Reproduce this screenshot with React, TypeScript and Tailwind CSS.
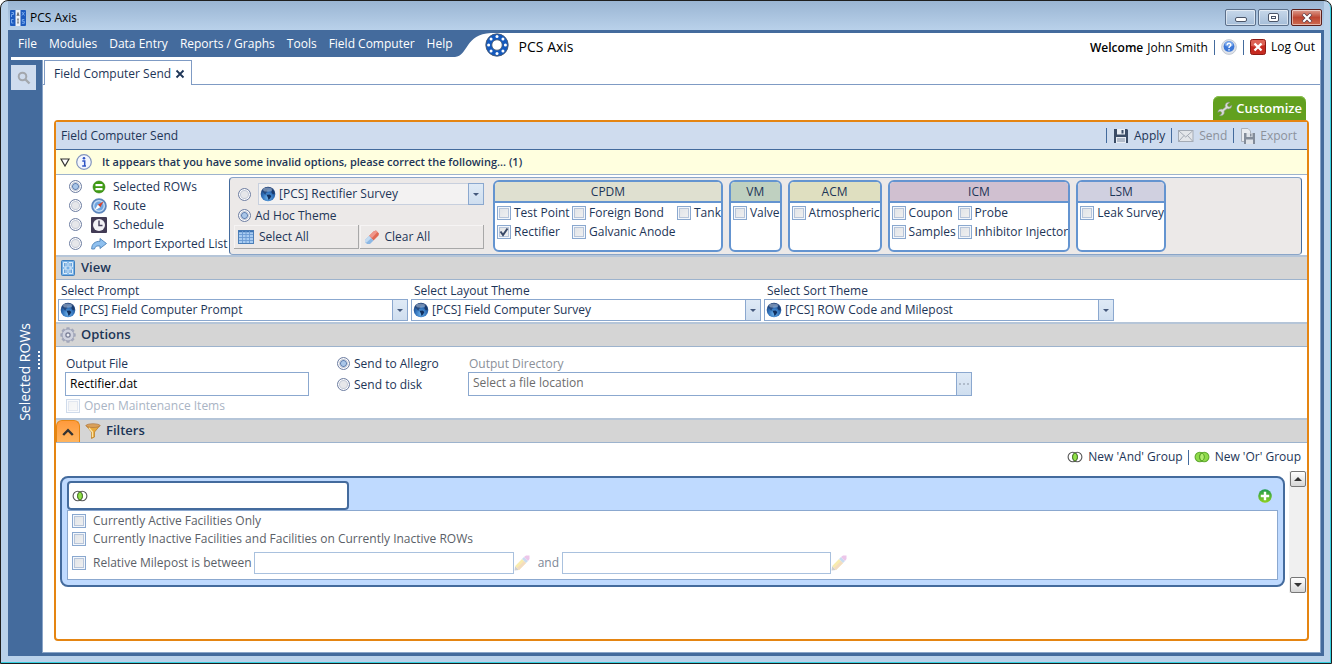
import React, { useId } from "react";

type IconProps = { className?: string };

function Globe({ className = "" }: IconProps) {
  return (
    <svg viewBox="0 0 16 16" className={`size-4 shrink-0 ${className}`} aria-hidden="true">
      <defs>
        <radialGradient id="globeSea" cx="50%" cy="75%" r="70%">
          <stop offset="0" stopColor="#6fb4ec" />
          <stop offset="0.55" stopColor="#2f6fb8" />
          <stop offset="1" stopColor="#1c3f78" />
        </radialGradient>
      </defs>
      <circle cx="8" cy="8" r="7.3" fill="url(#globeSea)" />
      <path d="M1.6 5C3 2.6 5 1.4 7.4 1.2L8.6 3 6.8 4.2 7.6 6 5.6 7 6.4 8.6 4.6 8.2 3.4 6.4Z" fill="#24497f" />
      <path d="M6.6 8.8 9.6 8.4 11.4 10 10.2 12.2 8.6 14 7.8 11.4Z" fill="#12305e" />
      <path d="M10.4 2.2C13 3 14.6 5.4 14.8 7.6L13 8.4 11.4 6.4 12 4.4Z" fill="#1b3b6c" />
      <ellipse cx="7.6" cy="3.6" rx="4.6" ry="2.2" fill="#fff" opacity="0.35" />
    </svg>
  );
}

function AppIcon() {
  return (
    <svg viewBox="0 0 16 16" className="size-4 shrink-0" aria-hidden="true">
      <rect width="16" height="16" rx="1" fill="#1d5bbf" />
      <rect x="5.5" width="5" height="16" fill="#eef2f8" />
      <path d="M7 6 8 2.5 9 6M7.3 5H8.7M8 9V13M7.2 9H8.8M7.2 13H8.8" stroke="#555" strokeWidth="0.8" fill="none" />
      <path d="M1.5 2.5H3.5V4.5H1.5V7M12 2 14.5 5.5M14.5 2 12 5.5M3.5 9.5H1.5V13H3.5M14.3 9.5H12.3V11.3H14.3V13.3H12" stroke="#7fb0f2" strokeWidth="0.9" fill="none" />
    </svg>
  );
}

function Flange() {
  const holes = Array.from({ length: 8 }, (_, i) => {
    const a = (i * Math.PI) / 4;
    return [12 + 8.4 * Math.cos(a), 12 + 8.4 * Math.sin(a)];
  });
  return (
    <svg viewBox="0 0 24 24" className="size-6 shrink-0" aria-hidden="true">
      <circle cx="12" cy="12" r="11.2" fill="#1459bd" stroke="#4a5a70" strokeWidth="0.9" />
      <circle cx="12" cy="12" r="5.2" fill="#fff" stroke="#4a5a70" strokeWidth="0.8" />
      {holes.map(([x, y]) => (
        <circle key={`${x}-${y}`} cx={x} cy={y} r="1.5" fill="#fff" />
      ))}
    </svg>
  );
}

function HelpIcon() {
  return (
    <svg viewBox="0 0 16 16" className="size-4" aria-hidden="true">
      <circle cx="8" cy="8" r="7.4" fill="#dfe3ea" stroke="#b9c0cc" strokeWidth="0.8" />
      <circle cx="8" cy="7.4" r="5.4" fill="#3d78d8" />
      <ellipse cx="8" cy="5" rx="4.4" ry="2.8" fill="#8db6f2" opacity="0.7" />
      <path d="M6.2 6.2C6.2 3.6 9.9 3.8 9.8 6 9.7 7.4 8 7.2 8 9M8 10.2V11.4" stroke="#fff" strokeWidth="1.5" fill="none" />
    </svg>
  );
}

function LogOutIcon() {
  return (
    <svg viewBox="0 0 16 16" className="size-4" aria-hidden="true">
      <rect x="0.5" y="0.5" width="15" height="15" rx="2" fill="#c62a20" stroke="#8c1a14" />
      <path d="M1 2.5Q1 1 2.5 1H13.500Q15 1 15 2.500V6Q8 9 1 7Z" fill="#e77a6c" opacity="0.7" />
      <path d="M4.500 4.500 11.500 11.500M11.500 4.500 4.500 11.500" stroke="#fff" strokeWidth="2.400" />
    </svg>
  );
}

function Wrench() {
  return (
    <svg viewBox="0 0 16 16" className="size-4 shrink-0" aria-hidden="true">
      <path
        d="M14.800 4.200 12.300 5.900 10.600 5.100 10.500 3.200 12.900 1.400C10.500.600 8.200 2 8.100 4.500L8.300 6.200 5.600 8.300C3.500 7.600 1.200 8.800.800 11.300L3 10.300 4.600 11.200 4.500 13 2.500 14.600C5 15.400 7.400 13.800 7.300 11.200L7.100 10.100 10 7.800C12.500 8.500 15 6.800 14.800 4.200Z"
        fill="#d9dcd8"
        stroke="#8c9388"
        strokeWidth="0.6"
      />
    </svg>
  );
}

function SaveIcon() {
  return (
    <svg viewBox="0 0 16 16" className="size-4" aria-hidden="true">
      <path d="M1 1H14L15 2V15H1Z" fill="#3b4c66" />
      <rect x="4" y="1" width="8" height="5.500" fill="#e8edf4" />
      <rect x="8.500" y="2" width="2" height="3.500" fill="#3b4c66" />
      <rect x="3" y="9" width="10" height="6" fill="#e8edf4" />
      <path d="M4 11H12M4 13H12" stroke="#7c8aa0" />
    </svg>
  );
}

function MailIcon() {
  return (
    <svg viewBox="0 0 16 16" className="size-4" aria-hidden="true">
      <rect x="0.500" y="2.500" width="14.500" height="11" fill="#e3e6ea" stroke="#a4abb5" />
      <path d="M1 3 7.700 9 14.500 3M1 13 6 7.500M14.500 13 9.500 7.500" stroke="#a4abb5" fill="none" />
    </svg>
  );
}

function ExportIcon() {
  return (
    <svg viewBox="0 0 16 16" className="size-4" aria-hidden="true">
      <path d="M1.500.500H8L10.500 3V13.500H1.500Z" fill="#e9ecf1" stroke="#aab1bc" />
      <path d="M4 5H15V16H4Z" fill="#838c9a" />
      <rect x="6.500" y="5" width="6" height="4" fill="#dfe3e9" />
      <rect x="6" y="11.500" width="7" height="4.500" fill="#dfe3e9" />
      <rect x="10" y="5.500" width="1.500" height="3" fill="#838c9a" />
    </svg>
  );
}

function InfoIcon() {
  return (
    <svg viewBox="0 0 16 16" className="size-4" aria-hidden="true">
      <circle cx="8" cy="8" r="7.300" fill="#f4f7fd" stroke="#8294bd" strokeWidth="1.200" />
      <circle cx="8" cy="4.300" r="1.300" fill="#2f55c4" />
      <path d="M6.300 6.900H8.700V12M6.200 12H10" stroke="#2f55c4" strokeWidth="1.500" fill="none" />
    </svg>
  );
}

function RowsIcon() {
  return (
    <svg viewBox="0 0 16 16" className="size-4" aria-hidden="true">
      <circle cx="8" cy="8" r="6" fill="#3f9c12" stroke="#2f7d0c" strokeWidth="0.600" />
      <rect x="4.500" y="5" width="7" height="2.200" fill="#fff" />
      <rect x="4.500" y="9" width="7" height="2.200" fill="#fff" />
    </svg>
  );
}

function RouteIcon() {
  return (
    <svg viewBox="0 0 16 16" className="size-4" aria-hidden="true">
      <circle cx="8" cy="8" r="6.900" fill="#c3dcf6" stroke="#5c86bd" strokeWidth="1.800" />
      <circle cx="8" cy="8" r="4.600" fill="#6fa5e0" />
      <path d="M12.500 3.500 9.300 9.200 6.800 6.700Z" fill="#d9402a" />
      <path d="M3.500 12.500 6.800 6.700 9.300 9.200Z" fill="#fff" />
    </svg>
  );
}

function ScheduleIcon() {
  return (
    <svg viewBox="0 0 16 16" className="size-4" aria-hidden="true">
      <rect width="16" height="16" rx="1" fill="#423b55" />
      <circle cx="8" cy="8" r="6" fill="#f3f2f6" />
      <path d="M8 3.500V8.500H11.500" stroke="#4b4560" strokeWidth="1.500" fill="none" />
    </svg>
  );
}

function ImportIcon() {
  return (
    <svg viewBox="0 0 16 16" className="size-4" aria-hidden="true">
      <path d="M9 2.500 15.500 7.500 9 12.500V10C5.500 9.500 4 10.500 3.500 13H.700C.500 8 4 5.200 9 5.300Z" fill="#8fc0ef" stroke="#4e82b8" strokeWidth="0.900" />
    </svg>
  );
}

function TableIcon() {
  return (
    <svg viewBox="0 0 16 16" className="size-4" aria-hidden="true">
      <rect x="0.500" y="1.500" width="15" height="13" fill="#a9cdf2" stroke="#4c7fb8" />
      <path d="M.500 2.500H15.500" stroke="#3b72b2" strokeWidth="1.500" />
      <path d="M4.500 2V14M8 2V14M11.500 2V14M1 5.500H15M1 8.500H15M1 11.500H15" stroke="#6a9ad2" strokeWidth="0.900" />
    </svg>
  );
}

function EraserIcon() {
  return (
    <svg viewBox="0 0 16 16" className="size-4" aria-hidden="true">
      <path d="M9.500 2.500 12 1.500 15 4.500 14.500 6.500 9.500 11.500 5 7Z" fill="#e06a55" />
      <path d="M9.500 2.500 12 1.500 13.500 3 8 9 5 7Z" fill="#f0968a" />
      <path d="M5 7 9.500 11.500 6 15H3L1 13V11Z" fill="#8db8e4" />
      <path d="M5 7 7.200 9.200 2.600 13.600 1 13V11Z" fill="#c3dbf2" />
    </svg>
  );
}

function ViewIcon() {
  return (
    <svg viewBox="0 0 16 16" className="size-4" aria-hidden="true">
      <rect x="1.500" y="0.500" width="13" height="15" rx="1" fill="#74b0e6" stroke="#3f7fbe" />
      <path d="M3.500 2.500H7V7H3.500ZM9 2.500H12.500V7H9ZM3.500 9H7V13.500H3.500ZM9 9H12.500V13.500H9Z" fill="#5497d6" stroke="#e8f3fd" strokeWidth="0.900" />
      <path d="M5.250 2.500V13.500M10.750 2.500V13.500" stroke="#e8f3fd" strokeWidth="0.600" />
    </svg>
  );
}

function GearIcon() {
  const teeth = Array.from({ length: 8 }, (_, i) => i * 45);
  return (
    <svg viewBox="0 0 16 16" className="size-4" aria-hidden="true">
      {teeth.map((t) => (
        <rect key={t} x="6.300" y="0.300" width="3.400" height="3.500" rx="0.600" fill="#a3a8bb" transform={`rotate(${t} 8 8)`} />
      ))}
      <circle cx="8" cy="8" r="5.900" fill="#d0d3df" stroke="#9a9fb4" strokeWidth="0.800" />
      <circle cx="8" cy="8" r="2.100" fill="#eceef3" stroke="#777c94" strokeWidth="1.200" />
    </svg>
  );
}

function FunnelIcon() {
  return (
    <svg viewBox="0 0 16 16" className="size-4" aria-hidden="true">
      <path d="M1 2.500 6.500 9V15.500L9.500 14V9L15 2.500Z" fill="#e8a93c" stroke="#b8791f" strokeWidth="0.700" />
      <ellipse cx="8" cy="2.600" rx="7" ry="1.900" fill="#d9a05a" stroke="#a8703a" strokeWidth="0.600" />
      <path d="M4 5 7.500 9V14" stroke="#fbe4a6" strokeWidth="1.300" fill="none" />
    </svg>
  );
}

function AndIcon() {
  return (
    <svg viewBox="0 0 16 12" className="h-3 w-4 shrink-0" aria-hidden="true">
      <circle cx="5.800" cy="6" r="4.700" fill="#fff" stroke="#555" strokeWidth="1.100" />
      <circle cx="10.200" cy="6" r="4.700" fill="none" stroke="#555" strokeWidth="1.100" />
      <path d="M8 1.900A4.700 4.700 0 0 1 8 10.100 4.700 4.700 0 0 1 8 1.900Z" fill="#92e04a" stroke="#4b8a1c" strokeWidth="0.900" />
    </svg>
  );
}

function OrIcon() {
  return (
    <svg viewBox="0 0 16 12" className="h-3 w-4 shrink-0" aria-hidden="true">
      <circle cx="5.800" cy="6" r="4.700" fill="#8fdb4a" stroke="#5fa82e" strokeWidth="1.100" />
      <circle cx="10.200" cy="6" r="4.700" fill="#8fdb4a" stroke="#5fa82e" strokeWidth="1.100" />
      <path d="M8 1.900A4.700 4.700 0 0 1 8 10.100 4.700 4.700 0 0 1 8 1.900Z" fill="#b1ec6e" stroke="#4f9a22" strokeWidth="0.900" />
    </svg>
  );
}

function PlusIcon() {
  return (
    <svg viewBox="0 0 14 14" className="size-3.5" aria-hidden="true">
      <defs>
        <linearGradient id="plusFill" x1="0" y1="0" x2="0" y2="1">
          <stop offset="0" stopColor="#1e9a50" />
          <stop offset="1" stopColor="#8fd11e" />
        </linearGradient>
      </defs>
      <circle cx="7" cy="7" r="6.800" fill="url(#plusFill)" />
      <path d="M7 2.800V11.200M2.800 7H11.200" stroke="#fff" strokeWidth="2.400" />
    </svg>
  );
}

function PencilIcon() {
  return (
    <svg viewBox="0 0 16 16" className="size-4 shrink-0" aria-hidden="true">
      <path d="M.500 15.500 1.200 11 5 15Z" fill="#cfcfcf" />
      <path d="M1.200 11 8 4 12 8 5 15Z" fill="#f8ecae" />
      <path d="M3 13 10 6 12 8 5 15Z" fill="#f3dcc0" />
      <path d="M8 4 10 2 14 6 12 8Z" fill="#c9dcf0" />
      <path d="M10 2 12 .500H15.500V4L14 6Z" fill="#ecc6ea" />
    </svg>
  );
}

function Triangle({ up = false, className = "" }: { up?: boolean; className?: string }) {
  return (
    <svg viewBox="0 0 8 4" className={`h-1 w-2 ${className}`} aria-hidden="true">
      <path d={up ? "M0 4 4 0 8 4Z" : "M0 0H8L4 4Z"} fill="currentColor" />
    </svg>
  );
}

function Radio({
  name,
  label,
  icon,
  checked = false,
  gap = "gap-1",
}: {
  name: string;
  label?: string;
  icon?: React.ReactNode;
  checked?: boolean;
  gap?: string;
}) {
  return (
    <label className={`flex items-center whitespace-nowrap ${gap}`}>
      <input
        type="radio"
        name={name}
        defaultChecked={checked}
        aria-label={label ? undefined : "Saved theme"}
        className="size-[13px] shrink-0 appearance-none rounded-full border border-[#6f7fa3] bg-[#e6e7ea] shadow-[inset_0_0_0_1px_#fff,inset_0_0_0_2px_#c3c9d6] checked:bg-[radial-gradient(circle,#a9c6e8_0_2px,#5f7fb0_3px,#dfe8f4_4px)]"
      />
      {icon}
      {label && <span>{label}</span>}
    </label>
  );
}

function Check({
  label,
  checked = false,
  disabled = false,
  gap = "gap-1",
}: {
  label: string;
  checked?: boolean;
  disabled?: boolean;
  gap?: string;
}) {
  return (
    <label className={`flex items-center whitespace-nowrap ${gap} ${disabled ? "text-[#a9b4c4]" : ""}`}>
      <span className="grid size-3.5 shrink-0">
        <input
          type="checkbox"
          defaultChecked={checked}
          disabled={disabled}
          className="peer col-start-1 row-start-1 size-3.5 appearance-none border border-[#8aa8cf] bg-linear-to-br from-[#dfe2e6] to-[#f2f2f2] shadow-[inset_0_0_0_1px_#f3f7fc,inset_0_0_0_2px_#b7c5da] disabled:opacity-40"
        />
        <svg viewBox="0 0 14 14" className="pointer-events-none z-10 col-start-1 row-start-1 hidden size-3.5 peer-checked:block" aria-hidden="true">
          <path d="M3.500 6.500 6 10 10.500 3.500" stroke="#3a4a68" strokeWidth="2" fill="none" />
        </svg>
      </span>
      <span>{label}</span>
    </label>
  );
}

function ThemeSelect({ id, value, muted = false }: { id: string; value: string; muted?: boolean }) {
  return (
    <div className={`flex h-[22px] min-w-0 items-center border ${muted ? "border-[#c8d0de] bg-[#f3f2f2]" : "border-[#8ba8cf] bg-white"}`}>
      <Globe className="ml-px" />
      <select id={id} aria-label={muted ? "Theme" : undefined} className="h-full min-w-0 flex-1 appearance-none bg-transparent pl-[3px] outline-none">
        <option>{value}</option>
      </select>
      <span
        className={`pointer-events-none flex items-center justify-center self-stretch border-[#8ba8cf] bg-linear-to-b from-[#dfeaf6] to-[#cfdeef] text-[#44597c] ${
          muted ? "-my-px -mr-px w-4 border" : "w-[15px] border-l"
        }`}
      >
        <svg viewBox="0 0 6 3" className="h-[3px] w-1.5" aria-hidden="true">
          <path d="M0 0H6L3 3Z" fill="currentColor" />
        </svg>
      </span>
    </div>
  );
}

function Group({ title, tint, grid, children }: { title: string; tint: string; grid: string; children: React.ReactNode }) {
  return (
    <section className="flex flex-col overflow-hidden rounded-md border-2 border-[#6494d0] bg-white">
      <h3 className={`h-[21px] border-b-2 border-[#6494d0] text-center leading-[19px] ${tint}`}>{title}</h3>
      <div className={`grid auto-rows-[19px] content-start pl-0.5 ${grid}`}>{children}</div>
    </section>
  );
}

function SectionBar({ icon, title, lead }: { icon: React.ReactNode; title: string; lead?: React.ReactNode }) {
  return (
    <div className="flex h-[25px] items-center gap-[5px] border-t-2 border-b border-t-[#b5c5d8] border-b-[#9db3cd] bg-[#d5d5d5] pl-1">
      {lead}
      {icon}
      <h2 className="text-[13px] font-semibold">{title}</h2>
    </div>
  );
}

function Divider() {
  return <span className="h-[15px] w-px bg-[#446b9d]" />;
}

function ThemeField({ label, value }: { label: string; value: string }) {
  const id = useId();
  return (
    <div className="flex min-w-0 max-w-[350px] flex-1 flex-col">
      <label htmlFor={id} className="h-[19px] pl-[3px] leading-[21px]">
        {label}
      </label>
      <ThemeSelect id={id} value={value} />
    </div>
  );
}

const menu = ["File", "Modules", "Data Entry", "Reports / Graphs", "Tools", "Field Computer", "Help"];

function TitleBar() {
  const base = "flex h-[17px] w-[31px] items-center justify-center rounded-xs border shadow-[inset_0_0_0_1px_#ffffff80]";
  return (
    <header className="flex h-[29px] items-center gap-1 bg-linear-to-b from-[#9ab5d3] to-[#b9d1ea] pt-1 pr-0.5 pl-0.5 text-black">
      <AppIcon />
      <h1 className="flex-1">PCS Axis</h1>
      <div className="flex gap-0.5">
        <button aria-label="Minimize" className={`${base} border-[#5b6f8a] bg-linear-to-b from-[#c7d8ea] to-[#a5bdd8]`}>
          <span className="mt-1 h-[5px] w-3 rounded-xs border border-[#4b5568] bg-white" />
        </button>
        <button aria-label="Restore" className={`${base} border-[#5b6f8a] bg-linear-to-b from-[#c7d8ea] to-[#a5bdd8]`}>
          <span className="flex h-[9px] w-[11px] items-center justify-center rounded-xs border border-[#4b5568] bg-white">
            <span className="h-[3px] w-[5px] border border-[#4b5568]" />
          </span>
        </button>
        <button aria-label="Close" className={`${base} border-[#5c1f1b] bg-linear-to-b from-[#dc9c8f] via-[#bd4632] to-[#cd6a50]`}>
          <svg viewBox="0 0 12 10" className="h-2.5 w-3" aria-hidden="true">
            <path d="M2 1 10 9M10 1 2 9" stroke="#5a3a44" strokeWidth="3.600" />
            <path d="M2.300 1.300 9.700 8.700M9.700 1.300 2.300 8.700" stroke="#fff" strokeWidth="2.200" />
          </svg>
        </button>
      </div>
    </header>
  );
}

function MenuBar() {
  return (
    <div className="flex h-6 bg-[#446b9d]">
      <nav className="flex items-start gap-3 pl-[7px] leading-[22px] text-white">
        {menu.map((m) => (
          <button key={m} className="whitespace-nowrap">
            {m}
          </button>
        ))}
      </nav>
      <svg viewBox="0 0 36 24" className="ml-0.5 h-6 w-9 shrink-0" aria-hidden="true">
        <path d="M0 24C13 23 10 1 36 0V24Z" fill="#fff" />
      </svg>
      <div className="flex flex-1 items-center bg-white text-black">
        <div className="-ml-1.5 flex flex-1 items-center gap-2.5">
          <Flange />
          <span className="pt-1 text-sm">PCS Axis</span>
        </div>
        <div className="flex items-center gap-1.5 pt-1 pr-1.5">
          <span className="flex gap-1 whitespace-nowrap pt-0.5">
            <b className="font-semibold">Welcome</b> John Smith
          </span>
          <Divider />
          <button aria-label="Help">
            <HelpIcon />
          </button>
          <Divider />
          <button className="flex items-center gap-[5px]">
            <LogOutIcon />
            Log Out
          </button>
        </div>
      </div>
    </div>
  );
}

function Sources() {
  return (
    <div className="flex w-[173px] shrink-0 flex-col pl-[13px]">
      {[
        { label: "Selected ROWs", icon: <RowsIcon /> },
        { label: "Route", icon: <RouteIcon /> },
        { label: "Schedule", icon: <ScheduleIcon /> },
        { label: "Import Exported List", icon: <ImportIcon /> },
      ].map((s, i) => (
        <div key={s.label} className="h-[19px] leading-[19px]">
          <Radio
            name="source"
            checked={i === 0}
            gap="gap-[6px]"
            label={s.label}
            icon={<span className="ml-[3px]">{s.icon}</span>}
          />
        </div>
      ))}
    </div>
  );
}

function Facilities() {
  const button = "flex h-6 flex-1 items-center gap-[5px] border-r border-b border-[#a8a8a8] pl-1 shadow-[inset_1px_1px_0_#f6f4f4]";
  const tight = "gap-[3px]";
  return (
    <div className="mr-[5px] flex min-w-0 flex-1 gap-1.5 rounded border border-[#8aa5c8] border-x-[#446b9d] bg-[#ece9e8] py-0.5 pl-1">
      <div className="flex w-[253px] shrink-0 flex-col pt-[3px] pr-[3px]">
        <div className="grid grid-cols-[20px_1fr] items-center pl-1">
          <Radio name="theme" />
          <ThemeSelect id="survey-theme" value="[PCS] Rectifier Survey" muted />
        </div>
        <div className="h-5 pl-1 leading-[21px]">
          <Radio name="theme" label="Ad Hoc Theme" checked />
        </div>
        <div className="flex gap-px">
          <button className={button}>
            <TableIcon />
            Select All
          </button>
          <button className={button}>
            <EraserIcon />
            Clear All
          </button>
        </div>
      </div>
      <Group title="CPDM" tint="bg-[#dfe0d0]" grid="grid-cols-[75px_105px_auto]">
        <Check gap={tight} label="Test Point" />
        <Check gap={tight} label="Foreign Bond" />
        <Check gap={tight} label="Tank" />
        <Check gap={tight} label="Rectifier" checked />
        <Check gap={tight} label="Galvanic Anode" />
      </Group>
      <Group title="VM" tint="bg-[#bfd0c0]" grid="">
        <Check gap={tight} label="Valve" />
      </Group>
      <Group title="ACM" tint="bg-[#dfdfc0]" grid="">
        <Check gap={tight} label="Atmospheric" />
      </Group>
      <Group title="ICM" tint="bg-[#d0c0d0]" grid="grid-cols-[66px_auto]">
        <Check gap={tight} label="Coupon" />
        <Check gap={tight} label="Probe" />
        <Check gap={tight} label="Samples" />
        <Check gap={tight} label="Inhibitor Injector" />
      </Group>
      <Group title="LSM" tint="bg-[#d0d0e0]" grid="">
        <Check gap={tight} label="Leak Survey" />
      </Group>
    </div>
  );
}

function Options() {
  return (
    <div className="flex h-[71px] items-start px-[9px] pt-1.5">
      <div className="flex w-[244px] flex-col pt-0.5">
        <label htmlFor="output-file" className="pl-px leading-[17px]">
          Output File
        </label>
        <input id="output-file" defaultValue="Rectifier.dat" className="h-6 border border-[#8ba8cf] bg-white px-1 pb-0.5 text-black outline-none" />
        <div className="pt-0.5 pl-px">
          <Check label="Open Maintenance Items" disabled />
        </div>
      </div>
      <div className="ml-7 flex w-[131px] flex-col leading-[21px]">
        <Radio name="target" label="Send to Allegro" checked />
        <Radio name="target" label="Send to disk" />
      </div>
      <div className="flex max-w-[504px] flex-1 flex-col pt-0.5 text-[#8a8f98]">
        <label htmlFor="output-dir" className="pl-px leading-[17px]">
          Output Directory
        </label>
        <div className="flex h-6 border border-[#8ba8cf] bg-white">
          <input
            id="output-dir"
            placeholder="Select a file location"
            className="min-w-0 flex-1 px-1 pb-0.5 outline-none placeholder:text-[#6c6c6c]"
          />
          <button aria-label="Browse" className="flex w-[15px] items-center justify-center gap-0.5 border-l border-[#8ba8cf] bg-linear-to-b from-[#dfeaf6] to-[#cfdeef]">
            <span className="size-0.5 bg-[#b0bccb]" />
            <span className="size-0.5 bg-[#b0bccb]" />
            <span className="size-0.5 bg-[#b0bccb]" />
          </button>
        </div>
      </div>
    </div>
  );
}

function FilterGroup() {
  const field = "h-[22px] border border-[#a9c1de] bg-white px-1 outline-none";
  return (
    <div className="mt-[5px] flex-1 self-start rounded-lg border-2 border-[#446b9d] bg-[#bfdaff] px-[5px] pt-[3px] pb-[5px]">
      <div className="flex items-center justify-between pr-1.5">
        <div className="flex h-[29px] w-[282px] items-center rounded-sm border-2 border-[#446b9d] bg-white pl-[3px]">
          <AndIcon />
        </div>
        <button aria-label="Add filter">
          <PlusIcon />
        </button>
      </div>
      <div className="border border-[#8ba8cf] bg-white pl-1 text-[#5b5f68]">
        <div className="h-[19px] leading-[19px]">
          <Check label="Currently Active Facilities Only" gap="gap-[7px]" />
        </div>
        <div className="h-[19px] leading-[18px]">
          <Check label="Currently Inactive Facilities and Facilities on Currently Inactive ROWs" gap="gap-[7px]" />
        </div>
        <div className="flex items-center pt-[3px] pb-[5px]">
          <Check label="Relative Milepost is between" gap="gap-[7px]" />
          <input aria-label="Milepost from" className={`ml-0.5 w-[260px] ${field}`} />
          <PencilIcon />
          <span className="w-8 pl-2 text-[#7d8797]">and</span>
          <input aria-label="Milepost to" className={`w-[269px] ${field}`} />
          <PencilIcon />
        </div>
      </div>
    </div>
  );
}

function ScrollBar() {
  const button = "flex size-4 items-center justify-center rounded-xs border border-[#777] bg-linear-to-b from-white to-[#d6d6d6] text-[#333]";
  return (
    <div className="flex w-[18px] flex-col items-center justify-between bg-[#f0f0f0]">
      <button aria-label="Scroll up" className={button}>
        <Triangle up />
      </button>
      <button aria-label="Scroll down" className={button}>
        <Triangle />
      </button>
    </div>
  );
}

function Filters() {
  return (
    <div className="flex flex-col pl-1">
      <div className="flex h-7 items-center justify-end gap-[5px] pr-1.5">
        <button className="flex items-center gap-[5px]">
          <AndIcon />
          New 'And' Group
        </button>
        <Divider />
        <button className="flex items-center gap-[5px]">
          <OrIcon />
          New 'Or' Group
        </button>
      </div>
      <div className="flex h-[122px] gap-1">
        <FilterGroup />
        <ScrollBar />
      </div>
    </div>
  );
}

function Panel() {
  return (
    <main className="flex flex-1 flex-col rounded border-2 border-[#e58512] bg-white">
      <div className="flex h-7 items-center justify-between border-b border-[#446b9d] bg-[#cfdcee] pr-2.5 pl-[5px]">
        <h2>Field Computer Send</h2>
        <div className="flex items-center gap-1.5">
          <Divider />
          <button className="flex items-center gap-[5px]">
            <SaveIcon />
            Apply
          </button>
          <Divider />
          <button disabled className="flex items-center gap-[5px] text-[#8b919b]">
            <MailIcon />
            Send
          </button>
          <Divider />
          <button disabled className="flex items-center gap-1 text-[#8b919b]">
            <ExportIcon />
            Export
          </button>
        </div>
      </div>
      <div className="flex h-[25px] items-center border-b border-[#9db3cd] bg-[#ffffdf] pl-1">
        <button aria-label="Collapse messages">
          <svg viewBox="0 0 10 9" className="h-[9px] w-2.5" aria-hidden="true">
            <path d="M1 1H9L5 8Z" fill="#fff" stroke="#333" strokeWidth="1.200" />
          </svg>
        </button>
        <span className="ml-1.5">
          <InfoIcon />
        </span>
        <p className="ml-2.5 text-[11px] font-semibold">It appears that you have some invalid options, please correct the following... (1)</p>
      </div>
      <div className="flex h-20 pt-0.5">
        <Sources />
        <Facilities />
      </div>
      <SectionBar title="View" icon={<ViewIcon />} />
      <div className="flex h-[42px] gap-[3px] px-0.5">
        <ThemeField label="Select Prompt" value="[PCS] Field Computer Prompt" />
        <ThemeField label="Select Layout Theme" value="[PCS] Field Computer Survey" />
        <ThemeField label="Select Sort Theme" value="[PCS] ROW Code and Milepost" />
      </div>
      <SectionBar title="Options" icon={<GearIcon />} />
      <Options />
      <SectionBar
        title="Filters"
        icon={<FunnelIcon />}
        lead={
          <button
            aria-label="Collapse filters"
            className="-ml-1 flex w-6 items-center justify-center self-stretch rounded-t-md border border-b-0 border-[#e58512] bg-linear-to-b from-[#ff9a3c] to-[#ffb45e]"
          >
            <svg viewBox="0 0 12 8" className="h-2 w-3" aria-hidden="true">
              <path d="M1.200 7 6 2.200 10.800 7" stroke="#333" strokeWidth="2.400" fill="none" />
            </svg>
          </button>
        }
      />
      <Filters />
    </main>
  );
}

export default function App() {
  return (
    <div className="flex min-h-screen flex-col rounded-t-lg border border-[#1e1e1e] bg-[#b9d1ea] px-[7px] pb-[7px] font-['Open_Sans',sans-serif] text-xs text-[#1d3557] shadow-[inset_-1px_-1px_0_#35cfe0]">
      <TitleBar />
      <div className="flex flex-1 flex-col border-[3px] border-[#446b9d] bg-white">
        <MenuBar />
        <div className="mt-[3px] flex flex-1">
          <aside className="flex w-[31px] shrink-0 flex-col bg-[#446b9d] pt-[5px]">
            <button aria-label="Search" className="flex size-[25px] items-center justify-center bg-[#cfdcee]">
              <svg viewBox="0 0 14 14" className="size-3.5" aria-hidden="true">
                <circle cx="5.500" cy="5.500" r="3.800" fill="none" stroke="#a3a7ad" strokeWidth="2" />
                <path d="M8.500 8.500 12.500 12.500" stroke="#a3a7ad" strokeWidth="2.400" />
              </svg>
            </button>
            <div className="flex flex-1 items-center justify-between pr-0.5 pl-1">
              <span className="rotate-180 text-sm leading-5 text-white [writing-mode:vertical-rl]">Selected ROWs</span>
              <span className="mb-6 h-[18px] border-l-2 border-dotted border-white" />
            </div>
          </aside>
          <div className="flex min-w-0 flex-1 flex-col border-r border-b border-l border-[#8aa5c8]">
            <div className="flex h-[25px]">
              <span className="w-px border-b border-[#7f9bc4]" />
              <div className="flex w-[148px] items-center justify-between border border-b-0 border-[#7f9bc4] pt-0.5 pr-1.5 pl-[9px]">
                <span className="whitespace-nowrap">Field Computer Send</span>
                <button aria-label="Close tab">
                  <svg viewBox="0 0 10 10" className="size-2.5" aria-hidden="true">
                    <path d="M1.500 1.500 8.500 8.500M8.500 1.500 1.500 8.500" stroke="#1d3557" strokeWidth="1.800" />
                  </svg>
                </button>
              </div>
              <span className="flex-1 border-b border-[#7f9bc4]" />
            </div>
            <div className="flex flex-1 flex-col px-[11px] pt-[11px] pb-[11px]">
              <button className="mr-[3px] flex h-6 items-center gap-[3px] self-end rounded-t-md bg-[#62a01f] px-1 pt-0.5 text-[13px] font-semibold text-white shadow-[inset_0_1px_0_#8cc152]">
                <Wrench />
                Customize
              </button>
              <Panel />
            </div>
          </div>
        </div>
      </div>
    </div>
  );
}
